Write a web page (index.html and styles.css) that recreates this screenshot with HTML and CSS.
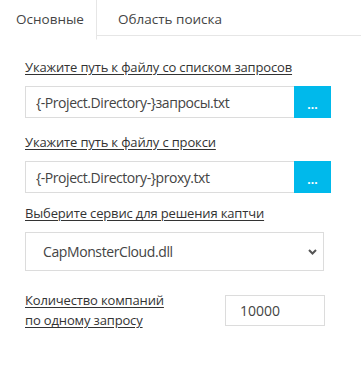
FILE: index.html
```html
<!DOCTYPE html>
<html lang="ru">
<head>
    <meta charset="UTF-8">
    <meta name="viewport" content="width=device-width, initial-scale=1.0">
    <title>Настройки</title>
    <link rel="stylesheet" href="styles.css">
</head>
<body>
    <div class="tabs">
        <div class="tab active">Основные</div>
        <div class="tab">Область поиска</div>
        <div class="tab-rest"></div>
    </div>

    <div class="panel">
        <div class="field">
            <label class="label" for="queriesPath">Укажите путь к файлу со списком запросов</label>
            <div class="path-row">
                <input type="text" id="queriesPath" class="path-input" value="{-Project.Directory-}запросы.txt">
                <button class="browse-btn">...</button>
            </div>
        </div>

        <div class="field">
            <label class="label" for="proxyPath">Укажите путь к файлу с прокси</label>
            <div class="path-row">
                <input type="text" id="proxyPath" class="path-input" value="{-Project.Directory-}proxy.txt">
                <button class="browse-btn">...</button>
            </div>
        </div>

        <div class="field field-select">
            <label class="label" for="captchaService">Выберите сервис для решения каптчи</label>
            <select id="captchaService" class="service-select">
                <option>CapMonsterCloud.dll</option>
                <option>AntiCaptcha.dll</option>
                <option>RuCaptcha.dll</option>
            </select>
        </div>

        <div class="field field-inline">
            <label class="label label-wide" for="companiesCount">Количество компаний<br>по одному запросу</label>
            <input type="text" id="companiesCount" class="count-input" value="10000">
        </div>
    </div>
</body>
</html>
```

FILE: styles.css
```css
body {
    margin: 0;
    background-color: #fff;
    font-family: "Open Sans", "Noto Sans", sans-serif;
    color: #333;
}
.tabs {
    display: flex;
    height: 36px;
}
.tab {
    padding: 0 16px;
    line-height: 38px;
    font-size: 13.5px;
    color: #444;
    border-bottom: 1px solid #e6e6e6;
    box-sizing: border-box;
}
.tab.active {
    width: 97px;
    border-right: 1px solid #e6e6e6;
    border-bottom-color: transparent;
    height: 40px;
}
.tab + .tab {
    padding-left: 21px;
}
.tab-rest {
    flex: 1;
    border-bottom: 1px solid #e6e6e6;
}
.panel {
    padding: 22px 0 0 25px;
}
.label {
    display: block;
    font-size: 13px;
    line-height: 18px;
    letter-spacing: -0.15px;
    color: #333;
    text-decoration: underline;
    text-underline-offset: 2px;
}
.field {
    margin-bottom: 15px;
}
.field .label {
    margin-bottom: 10px;
}
.path-row {
    display: flex;
    width: 306px;
    height: 32px;
}
.path-input {
    flex: 1;
    min-width: 0;
    box-sizing: border-box;
    border: 1px solid #dcdcdc;
    border-right: none;
    padding: 0 10px;
    font-family: inherit;
    font-size: 14px;
    letter-spacing: -0.45px;
    color: #444;
    outline: none;
}
.browse-btn {
    width: 37px;
    border: none;
    background-color: #00b9eb;
    color: #fff;
    font-family: inherit;
    font-size: 12px;
    font-weight: bold;
    padding: 4px 0 0;
    cursor: pointer;
}
.field-select {
    margin-top: -4px;
    margin-bottom: 19px;
}
.field-select .label {
    margin-bottom: 10px;
}
.service-select {
    appearance: none;
    -webkit-appearance: none;
    width: 299px;
    height: 39px;
    border: 1px solid #dcdcdc;
    border-radius: 0;
    background-color: #fff;
    background-image: url("data:image/svg+xml,%3Csvg xmlns='http://www.w3.org/2000/svg' width='9' height='6' viewBox='0 0 9 6'%3E%3Cpath d='M1 1l3.5 3.5L8 1' fill='none' stroke='%23555' stroke-width='2'/%3E%3C/svg%3E");
    background-repeat: no-repeat;
    background-position: right 6px center;
    padding: 0 20px 0 17px;
    font-family: inherit;
    font-size: 14px;
    letter-spacing: -0.4px;
    color: #444;
    outline: none;
}
.field-inline {
    display: flex;
    align-items: center;
}
.field-inline .label {
    margin-bottom: 0;
    line-height: 20px;
}
.label-wide {
    width: 200px;
}
.count-input {
    width: 100px;
    height: 31px;
    box-sizing: border-box;
    border: 1px solid #dcdcdc;
    padding: 0 14px;
    font-family: inherit;
    font-size: 14px;
    color: #444;
    outline: none;
}
```
